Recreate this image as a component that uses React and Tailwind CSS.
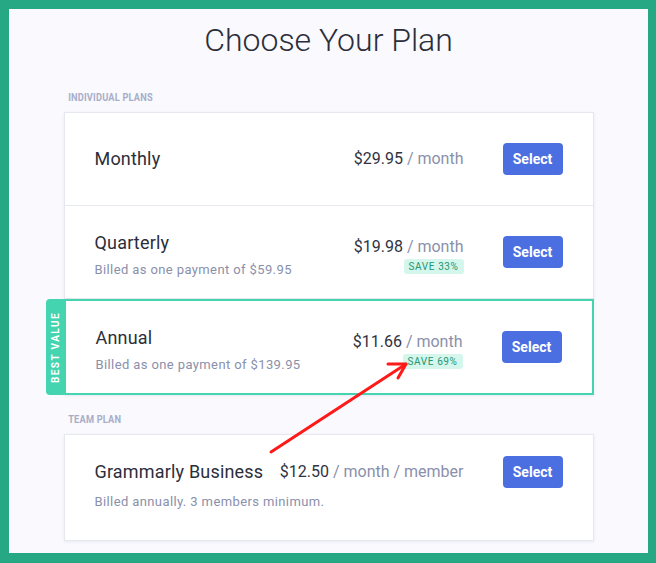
const font = { fontFamily: "Roboto, 'Noto Sans', sans-serif" };

function Badge({ children }) {
  return (
    <span className="mt-[2px] inline-flex h-[15px] items-center rounded-[3px] bg-[#d5f6ec] px-[5px] text-[10px] font-normal tracking-[0.06em] text-[#23966f]">
      {children}
    </span>
  );
}

function SelectButton() {
  return (
    <button className="h-[32px] w-[60px] shrink-0 rounded-[4px] bg-[#4b6fe0] text-[14px] font-bold text-white">
      Select
    </button>
  );
}

function Price({ amount, unit, save }) {
  return (
    <div className={"flex flex-col items-end " + (save ? "pt-[7px]" : "")}>
      <div className="text-[16px] leading-[20px]">
        <span className="text-[#30333f]">{amount}</span>
        <span className="text-[#8a90ab]"> {unit}</span>
      </div>
      {save && <Badge>SAVE {save}</Badge>}
    </div>
  );
}

function PlanRow({ name, sub, amount, save, className = "" }) {
  return (
    <div className={"flex items-center justify-between " + className}>
      <div className={"flex flex-col " + (sub ? "pt-[6px]" : "")}>
        <span className="text-[18px] leading-[24px] tracking-[0.01em] text-[#2b2e3a]">{name}</span>
        {sub && (
          <span className="mt-[6px] text-[13px] leading-[18px] tracking-[0.03em] text-[#8a90ab]">
            {sub}
          </span>
        )}
      </div>
      <div className="flex items-center gap-[39px]">
        <Price amount={amount} unit="/ month" save={save} />
        <SelectButton />
      </div>
    </div>
  );
}

function SectionLabel({ children, className = "" }) {
  return (
    <div
      className={
        "origin-left scale-x-[0.84] pl-[5px] text-[11px] leading-[16px] font-bold tracking-[0.02em] text-[#a8aec8] " +
        className
      }
    >
      {children}
    </div>
  );
}

export default function App() {
  return (
    <div
      className="relative box-border h-[563px] w-[656px] border-[9px] border-b-[10px] border-r-[8px] border-[#25a883] bg-[#f9f9fe]"
      style={font}
    >
      <h1 className="pt-[11px] text-center text-[32px] leading-[40px] font-light text-[#2b2e3a]">
        Choose Your Plan
      </h1>

      <div className="mx-auto w-[530px]">
        <SectionLabel className="mt-[30px] mb-[6px]">INDIVIDUAL PLANS</SectionLabel>

        <div className="border border-[#e6e8f0] bg-white shadow-[0_1px_3px_rgba(40,50,90,0.08)]">
          <PlanRow name="Monthly" amount="$29.95" className="h-[92px] px-[30px]" />
          <PlanRow
            name="Quarterly"
            sub="Billed as one payment of $59.95"
            amount="$19.98"
            save="33%"
            className="h-[93px] border-t border-[#e8e9f0] px-[30px]"
          />
        </div>

        <div className="relative border-2 border-[#45d4b0] bg-white shadow-[0_1px_3px_rgba(40,50,90,0.08)]">
          <div className="absolute top-[-2px] bottom-[-2px] left-[-20px] flex w-[19px] items-center justify-center rounded-l-[4px] bg-[#45d4b0]">
            <span className="-rotate-90 whitespace-nowrap text-[10px] font-bold tracking-[0.14em] text-white">
              BEST VALUE
            </span>
          </div>
          <PlanRow
            name="Annual"
            sub="Billed as one payment of $139.95"
            amount="$11.66"
            save="69%"
            className="h-[92px] px-[30px]"
          />
        </div>

        <SectionLabel className="mt-[17px] mb-[6px]">TEAM PLAN</SectionLabel>

        <div className="border border-[#e6e8f0] bg-white px-[30px] pt-[21px] pb-[29px] shadow-[0_1px_3px_rgba(40,50,90,0.08)]">
          <div className="flex items-center justify-between">
            <span className="text-[18px] leading-[24px] tracking-[0.01em] text-[#2b2e3a]">
              Grammarly Business
            </span>
            <div className="flex items-center gap-[39px]">
              <div className="text-[16px] leading-[20px]">
                <span className="text-[#30333f]">$12.50</span>
                <span className="text-[#8a90ab]"> / month / member</span>
              </div>
              <SelectButton />
            </div>
          </div>
          <div className="mt-[5px] text-[13px] leading-[18px] tracking-[0.03em] text-[#8a90ab]">
            Billed annually. 3 members minimum.
          </div>
        </div>
      </div>

      <svg
        className="pointer-events-none absolute top-[-9px] left-[-9px]"
        width="656"
        height="563"
        viewBox="0 0 656 563"
      >
        <g stroke="#ff1a1a" strokeWidth="3" strokeLinecap="round" fill="none">
          <line x1="271" y1="452" x2="406" y2="364" />
          <polyline points="388,364 406,364 398,378" strokeLinejoin="round" />
        </g>
      </svg>
    </div>
  );
}
